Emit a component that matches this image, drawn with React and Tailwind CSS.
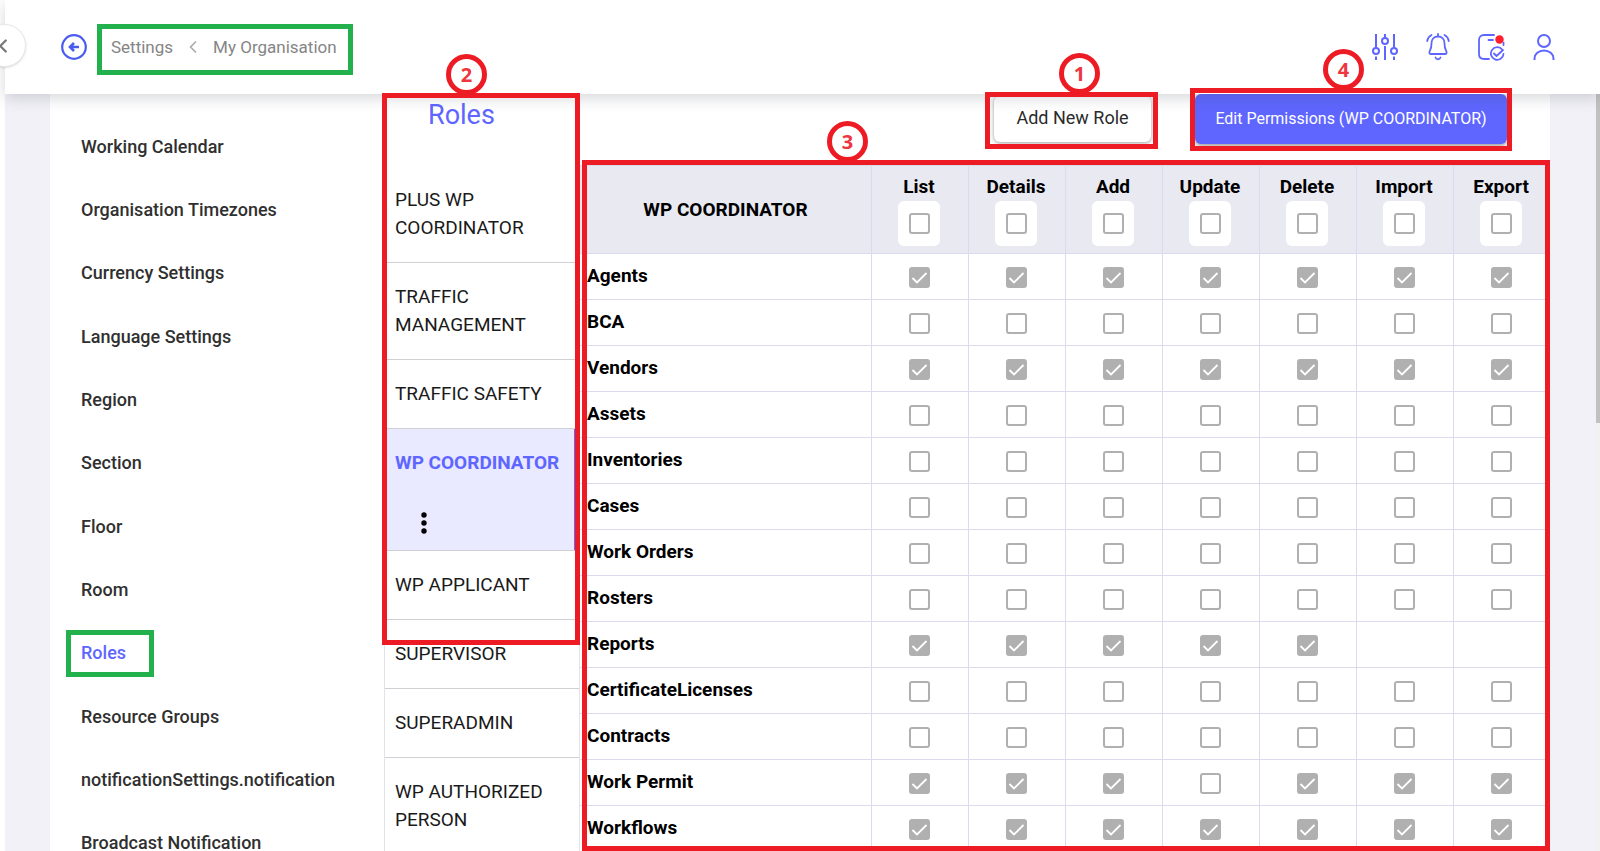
import React from 'react'
import { ChevronLeft } from 'lucide-react'
import clsx from 'clsx'

const settingsLinks = [
  'Working Calendar',
  'Organisation Timezones',
  'Currency Settings',
  'Language Settings',
  'Region',
  'Section',
  'Floor',
  'Room',
  'Roles',
  'Resource Groups',
  'notificationSettings.notification',
  'Broadcast Notification',
]

const roles = [
  'PLUS WP COORDINATOR',
  'TRAFFIC MANAGEMENT',
  'TRAFFIC SAFETY',
  'WP COORDINATOR',
  'WP APPLICANT',
  'SUPERVISOR',
  'SUPERADMIN',
  'WP AUTHORIZED PERSON',
]

const actions = ['List', 'Details', 'Add', 'Update', 'Delete', 'Import', 'Export']

// 1 = granted, 0 = not granted, - = action does not exist for the module
const permissions = [
  { module: 'Agents', flags: '1111111' },
  { module: 'BCA', flags: '0000000' },
  { module: 'Vendors', flags: '1111111' },
  { module: 'Assets', flags: '0000000' },
  { module: 'Inventories', flags: '0000000' },
  { module: 'Cases', flags: '0000000' },
  { module: 'Work Orders', flags: '0000000' },
  { module: 'Rosters', flags: '0000000' },
  { module: 'Reports', flags: '11111--' },
  { module: 'CertificateLicenses', flags: '0000000' },
  { module: 'Contracts', flags: '0000000' },
  { module: 'Work Permit', flags: '1110111' },
  { module: 'Workflows', flags: '1111111' },
]

/* ─────────────────────────────────────────────
   CALLOUTS
───────────────────────────────────────────── */
const Callout = ({ number, className, badge }) => (
  <div className={clsx('pointer-events-none absolute z-20 border-[5px] border-[#ed1c24]', className)}>
    <span
      className={clsx(
        "absolute bottom-full mb-[3px] flex size-[41px] items-center justify-center rounded-full border-[5px] border-[#ed1c24] bg-white font-['Open_Sans',sans-serif] text-xl leading-none font-bold text-[#ee3640]",
        badge
      )}
    >
      {number}
    </span>
  </div>
)

const Highlight = ({ className }) => (
  <span className={clsx('pointer-events-none absolute z-20 border-[5px] border-[#22b14c]', className)} />
)

/* ─────────────────────────────────────────────
   HEADER
───────────────────────────────────────────── */
const SlidersIcon = () => (
  <svg width="28" height="28" viewBox="0 0 28 28" fill="none" stroke="currentColor" strokeWidth="2">
    <path d="M5 1v13.5M5 23.500v3.500M14 1v3.500M14 13v14M23 1v13.500M23 23.500v3.500" />
    <circle cx="5" cy="18" r="3" />
    <circle cx="14" cy="8" r="3" />
    <circle cx="23" cy="18" r="3" />
  </svg>
)

const BellIcon = () => (
  <svg width="28" height="28" viewBox="0 0 28 28" fill="none" stroke="currentColor" strokeWidth="1.8" strokeLinecap="round" strokeLinejoin="round">
    <path d="M14 1v2.500M14 3.500c-4 0-6.500 3-6.500 6.800 0 4-.6 6-1.700 7.700-.9 1.500-.3 3 1.200 3h14c1.500 0 2.100-1.500 1.200-3-1.100-1.700-1.700-3.700-1.700-7.700 0-3.800-2.500-6.800-6.500-6.800z" />
    <path d="M11.500 24.500c1 2.300 4 2.300 5 0M7.500 2C5 3.300 3.600 5.400 3.200 8M20.500 2c2.500 1.300 3.900 3.400 4.300 6" />
  </svg>
)

const TasksIcon = () => (
  <svg width="28" height="28" viewBox="0 0 28 28" fill="none" stroke="currentColor" strokeWidth="1.8" strokeLinecap="round" strokeLinejoin="round">
    <path d="M17 2H7C4 2 2 4 2 7v14c0 3 2 5 5 5h5M26.500 9.500v2.500M11.500 7H16" />
    <path d="M25.300 16.800A6.300 6.300 0 1 0 26.500 21M17 20.500l2.500 2.500 6.500-6" />
    <circle cx="22.500" cy="6.500" r="4.200" fill="#ff1f2d" stroke="none" />
  </svg>
)

const UserIcon = () => (
  <svg width="28" height="28" viewBox="0 0 28 28" fill="none" stroke="currentColor" strokeWidth="2">
    <circle cx="14" cy="8" r="6" />
    <path d="M4.500 27v-1.500a9.500 8 0 0 1 19 0V27" />
  </svg>
)

const toolbar = [
  { label: 'Filters', Icon: SlidersIcon },
  { label: 'Notifications', Icon: BellIcon },
  { label: 'Tasks', Icon: TasksIcon },
  { label: 'Profile', Icon: UserIcon },
]

const Header = () => (
  <header className="relative z-10 flex h-[94px] shrink-0 items-center bg-white pr-[42px] pl-14 shadow-[0_4px_14px_rgba(70,75,90,0.22)]">
    <button
      aria-label="Collapse menu"
      className="absolute top-6 -left-[22px] flex size-[43px] items-center justify-end rounded-full border border-gray-200 bg-white pr-[11px] text-[#777] shadow"
    >
      <ChevronLeft size={22} strokeWidth={2.500} />
    </button>

    <button aria-label="Back" className="mr-6 text-[#4a5cf0]">
      <svg width="26" height="26" viewBox="0 0 26 26" fill="none" stroke="currentColor" strokeWidth="2.200">
        <circle cx="13" cy="13" r="11.800" />
        <path d="M18 13H9.500M13 9l-4 4 4 4" strokeWidth="2.600" />
      </svg>
    </button>

    <nav aria-label="Breadcrumb" className="relative flex items-center text-[17px] leading-6 text-[#858585]">
      <a href="#settings">Settings</a>
      <ChevronLeft size={20} strokeWidth={2} className="mx-2.5 text-[#aaa]" />
      <a href="#organisation">My Organisation</a>
      <Highlight className="-top-[11px] -right-4 -bottom-4 -left-[14px]" />
    </nav>

    <div className="ml-auto flex items-center gap-[25px] text-[#5e66ff]">
      {toolbar.map(({ label, Icon }) => (
        <button key={label} aria-label={label}>
          <Icon />
        </button>
      ))}
    </div>
  </header>
)

/* ─────────────────────────────────────────────
   SETTINGS MENU
───────────────────────────────────────────── */
const SettingsMenu = () => (
  <nav aria-label="Settings" className="w-[334px] shrink-0 pt-[21px] pl-[31px]">
    <ul className="grid h-[760px] auto-rows-fr">
      {settingsLinks.map((name) => (
        <li key={name} className="flex items-center">
          <a
            href="#settings"
            className={clsx(
              'relative text-lg leading-6 font-medium',
              name === 'Roles' ? 'text-[#5e66ff]' : 'text-[#303030]'
            )}
          >
            {name}
            {name === 'Roles' && <Highlight className="-top-[11px] -right-7 -bottom-3 -left-[15px]" />}
          </a>
        </li>
      ))}
    </ul>
  </nav>
)

/* ─────────────────────────────────────────────
   ROLES
───────────────────────────────────────────── */
const RoleList = () => (
  <aside className="relative w-[196px] shrink-0 border-x border-[#e2e2ea]">
    <h1 className="h-[72px] pt-1 pl-[43px] text-[27px] leading-[34px] text-[#5e66ff]">Roles</h1>
    <ul>
      {roles.map((name) => {
        const selected = name === 'WP COORDINATOR'
        return (
          <li
            key={name}
            className={clsx(
              'border-b border-[#d0d0d4] py-5 pl-2.5 text-[19px] leading-7',
              selected ? 'mr-0.5 border-r-[3px] border-r-[#5e66ff] bg-[#e9e9ff]' : 'text-[#1a1a1a]'
            )}
          >
            <a href="#role" className={clsx('block', selected && 'font-bold whitespace-nowrap text-[#5e66ff]')}>
              {name}
            </a>
            {selected && (
              <button aria-label="Role options" className="mt-8 -mb-[7px] ml-[17px] block text-black">
                <svg width="24" height="28" viewBox="0 0 24 28" fill="currentColor">
                  <circle cx="12" cy="6" r="2.700" />
                  <circle cx="12" cy="14" r="2.700" />
                  <circle cx="12" cy="22" r="2.700" />
                </svg>
              </button>
            )}
          </li>
        )
      })}
    </ul>
    <Callout number={2} className="-top-px -right-px -left-[3px] h-[552px]" badge="left-[59px]" />
  </aside>
)

/* ─────────────────────────────────────────────
   PERMISSIONS TABLE
───────────────────────────────────────────── */
const Checkbox = ({ label, ...props }) => (
  <span className="inline-grid place-items-center align-middle">
    <input
      type="checkbox"
      aria-label={label}
      className="peer size-[21px] appearance-none rounded-[3px] border-2 border-[#b0b0b0] bg-white [grid-area:1/1] checked:bg-[#b0b0b0]"
      {...props}
    />
    <svg
      width="17"
      height="17"
      viewBox="0 0 17 17"
      fill="none"
      stroke="white"
      strokeWidth="1.800"
      className="pointer-events-none invisible [grid-area:1/1] peer-checked:visible"
    >
      <path d="M1.500 9l4.500 4.500L15.500 4" />
    </svg>
  </span>
)

const PermissionTable = () => (
  <table className="w-full table-fixed border-separate border-spacing-0 text-[19px] leading-6 text-black">
    <thead>
      <tr className="bg-[#e9e9f2]">
        <th scope="col" className="border-t border-b border-[#dcdaee] font-bold">
          WP COORDINATOR
        </th>
        {actions.map((action) => (
          <th key={action} scope="col" className="w-[97px] border-t border-b border-l border-[#dcdaee] pt-[9px] pr-0.5 pb-[7px] font-bold">
            {action}
            <div className="mx-auto mt-0.5 flex h-[45px] w-[42px] items-center justify-center rounded-md bg-white">
              <Checkbox label={`${action} all`} />
            </div>
          </th>
        ))}
      </tr>
    </thead>
    <tbody>
      {permissions.map(({ module, flags }) => (
        <tr key={module} className="h-[46px]">
          <th scope="row" className="border-b border-[#dcdaee] pb-0.5 pl-[7px] text-left font-bold">
            {module}
          </th>
          {actions.map((action, i) => (
            <td key={action} className="border-b border-l border-[#dcdaee] pr-0.5 text-center">
              {flags[i] !== '-' && (
                <Checkbox label={`${module} ${action}`} defaultChecked={flags[i] === '1'} disabled />
              )}
            </td>
          ))}
        </tr>
      ))}
    </tbody>
  </table>
)

const Permissions = () => (
  <section className="flex min-w-0 flex-1 flex-col">
    <div className="flex h-[71px] shrink-0 items-start justify-end gap-11 pr-[43px]">
      <div className="relative mt-0.5">
        <button className="h-[46px] w-[157px] rounded-md bg-white pb-0.5 text-lg text-[#2b2b2b] shadow-[0_1px_4px_rgba(0,0,0,0.4)]">
          Add New Role
        </button>
        <Callout number={1} className="-top-1 -right-[7px] -bottom-[7px] -left-[9px]" badge="left-[69px]" />
      </div>
      <div className="relative">
        <button className="h-[50px] w-[312px] rounded-md bg-[#5e66ff] text-base text-white shadow-[0_2px_4px_rgba(0,0,0,0.4)]">
          Edit Permissions (WP COORDINATOR)
        </button>
        <Callout number={4} className="-top-1.5 -right-[5px] -bottom-[7px] -left-[5px]" badge="left-[128px]" />
      </div>
    </div>
    <div className="relative min-h-0 flex-1">
      <div className="h-full overflow-hidden">
        <PermissionTable />
      </div>
      <Callout number={3} className="-top-[5px] right-0 bottom-0 left-0.5" badge="left-[240px]" />
    </div>
  </section>
)

const App = () => (
  <div className="flex h-screen overflow-hidden bg-white font-['Roboto',sans-serif]">
    <div className="w-[5px] shrink-0" />
    <div className="flex min-w-0 flex-1 flex-col bg-[#f2f1f7]">
      <Header />
      <div className="flex min-h-0 flex-1">
        <main className="mr-[46px] ml-[45px] flex min-w-0 flex-1 bg-white">
          <SettingsMenu />
          <RoleList />
          <Permissions />
        </main>
        <div className="w-1 shrink-0 bg-[#f1f1f1]">
          <div className="h-[329px] bg-[#c1c1c1]" />
        </div>
      </div>
    </div>
  </div>
)

export default App
